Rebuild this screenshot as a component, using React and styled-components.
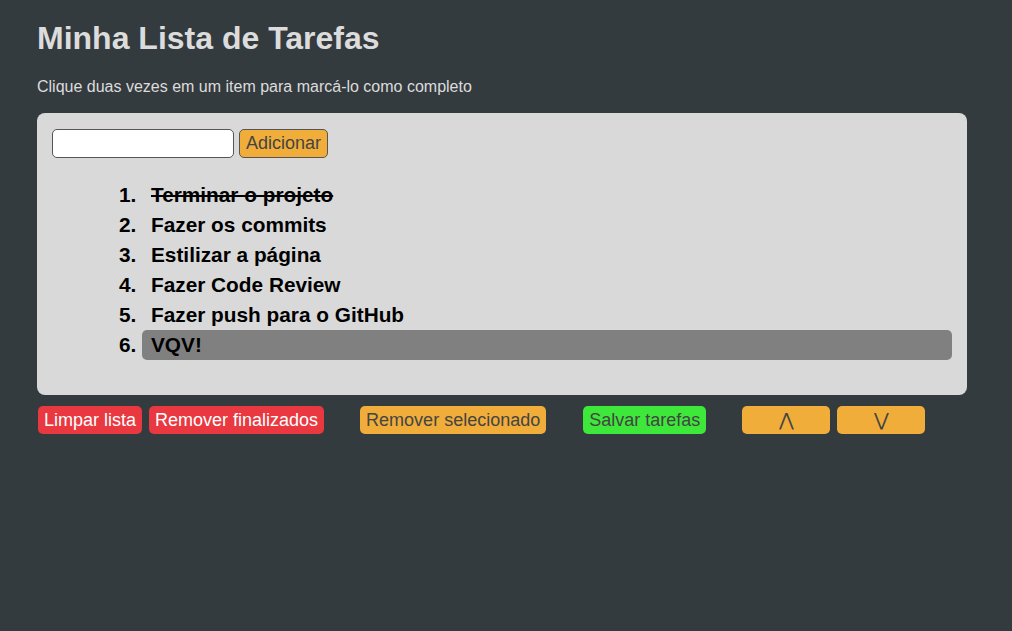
import React, { useState } from "react"
import styled, { createGlobalStyle } from "styled-components"

const GlobalStyle = createGlobalStyle`
  html, body {
    margin: 0;
    background: #343b3f;
    font-family: "Liberation Sans", Arial, sans-serif;
  }
`

const Page = styled.div`
  padding: 20px 45px 0 37px;
`

const Title = styled.h1`
  margin: 0;
  font-size: 32px;
  font-weight: bold;
  line-height: 37px;
  color: #dcdcdc;
`

const Subtitle = styled.p`
  margin: 21px 0 0;
  font-size: 16px;
  line-height: 18px;
  color: #dcdcdc;
`

const Panel = styled.div`
  margin-top: 17px;
  background: #d9d9d9;
  border-radius: 8px;
  padding: 16px 15px 35px;
`

const Form = styled.div`
  display: flex;
  align-items: center;
  gap: 5px;
`

const Input = styled.input`
  width: 182px;
  height: 29px;
  box-sizing: border-box;
  border: 1px solid #555;
  border-radius: 5px;
  background: #fff;
  font-family: inherit;
  font-size: 16px;
`

const Button = styled.button`
  height: ${p => p.$h || 28}px;
  box-sizing: border-box;
  padding: 0 ${p => p.$px || 6}px;
  width: ${p => (p.$w ? `${p.$w}px` : "auto")};
  border: ${p => (p.$bordered ? "1px solid #555" : "none")};
  border-radius: 5px;
  background: ${p => p.$bg};
  color: ${p => p.$fg || "#444"};
  font-family: "Liberation Sans", Arial, sans-serif;
  font-size: 18px;
  cursor: pointer;
`

const List = styled.ol`
  margin: 22px 0 0;
  padding-left: 90px;
`

const Item = styled.li`
  font-size: 1.3rem;
  font-weight: bold;
  line-height: 30px;
  color: #000;
  padding-left: 9px;
  border-radius: 5px;
  background: ${p => (p.$selected ? "#808080" : "transparent")};
  text-decoration: ${p => (p.$done ? "line-through" : "none")};
  cursor: pointer;
  &::marker {
    font-weight: bold;
  }
`

const Toolbar = styled.div`
  display: flex;
  align-items: center;
  margin-top: 11px;
  padding-left: 1px;
`

const Group = styled.div`
  display: flex;
  align-items: center;
  gap: ${p => p.$gap || 7}px;
  margin-left: ${p => p.$ml || 0}px;
`

const tasks = [
  { text: "Terminar o projeto", done: true },
  { text: "Fazer os commits" },
  { text: "Estilizar a página" },
  { text: "Fazer Code Review" },
  { text: "Fazer push para o GitHub" },
  { text: "VQV!" },
]

export default function App() {
  const [selected, setSelected] = useState(5)

  return (
    <Page>
      <GlobalStyle />
      <Title>Minha Lista de Tarefas</Title>
      <Subtitle>Clique duas vezes em um item para marcá-lo como completo</Subtitle>
      <Panel>
        <Form>
          <Input />
          <Button $bg="#f0ad3a" $bordered $h={29} $px={6}>Adicionar</Button>
        </Form>
        <List>
          {tasks.map((t, i) => (
            <Item key={i} $done={t.done} $selected={selected === i} onClick={() => setSelected(i)}>
              {t.text}
            </Item>
          ))}
        </List>
      </Panel>
      <Toolbar>
        <Group>
          <Button $bg="#e9383f" $fg="#fff">Limpar lista</Button>
          <Button $bg="#e9383f" $fg="#fff">Remover finalizados</Button>
        </Group>
        <Group $ml={36}>
          <Button $bg="#f0ad3a">Remover selecionado</Button>
        </Group>
        <Group $ml={37}>
          <Button $bg="#3ee83a">Salvar tarefas</Button>
        </Group>
        <Group $ml={36}>
          <Button $bg="#f0ad3a" $w={88}>⋀</Button>
          <Button $bg="#f0ad3a" $w={88}>⋁</Button>
        </Group>
      </Toolbar>
    </Page>
  )
}
